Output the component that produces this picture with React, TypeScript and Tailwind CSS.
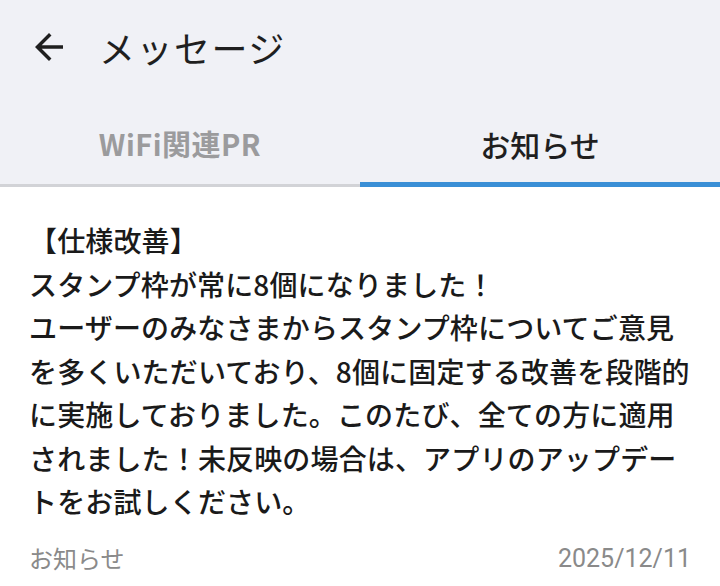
const lines = [
  "スタンプ枠が常に8個になりました！",
  "ユーザーのみなさまからスタンプ枠についてご意見",
  "を多くいただいており、8個に固定する改善を段階的",
  "に実施しておりました。このたび、全ての方に適用",
  "されました！未反映の場合は、アプリのアップデー",
  "トをお試しください。",
];

function BackArrow() {
  return (
    <svg viewBox="0 0 24 24" className="w-[42px] h-[42px] fill-[#1f1f1f]">
      <path d="M20 11H7.83l5.59-5.59L12 4l-8 8 8 8 1.41-1.41L7.83 13H20v-2z" />
    </svg>
  );
}

export default function App() {
  return (
    <div
      className="w-[720px] h-[586px] bg-white overflow-hidden"
      style={{ fontFamily: '"Noto Sans CJK JP", "Noto Sans", sans-serif' }}
    >
      <header className="bg-[#f0f1f6]">
        <div className="h-[94px] flex items-center pl-[28px]">
          <BackArrow />
          <h1 className="ml-[29px] text-[36px] leading-none text-[#1f1f1f] tracking-[1.5px]">
            メッセージ
          </h1>
        </div>

        <nav className="flex h-[93px]">
          <div className="flex-1 flex flex-col">
            <div className="flex-1 flex items-center justify-center pt-[12px]">
              <span className="text-[29px] font-bold text-[#9b9b9d] tracking-[0.5px]">
                WiFi関連PR
              </span>
            </div>
            <div className="h-[5px] flex items-end">
              <div className="w-full h-[3px] bg-[#d2d3d7]" />
            </div>
          </div>
          <div className="flex-1 flex flex-col">
            <div className="flex-1 flex items-center justify-center pt-[12px]">
              <span className="text-[30px] font-medium text-[#1f1f1f]">
                お知らせ
              </span>
            </div>
            <div className="h-[5px] bg-[#3a8fd6]" />
          </div>
        </nav>
      </header>

      <section className="px-[29px] pt-[32px]">
        <div className="text-[28px] leading-[43.5px] font-medium text-[#1a1a1a] whitespace-nowrap tracking-[0.15px]">
          <p>【仕様改善】</p>
          {lines.map((line) => (
            <p key={line}>{line}</p>
          ))}
        </div>

        <div className="mt-[16px] flex items-center justify-between">
          <span className="text-[24px] text-[#8a8a8a]">お知らせ</span>
          <span
            className="text-[25px] text-[#8a8a8a]"
            style={{ fontFamily: "Roboto, sans-serif" }}
          >
            2025/12/11
          </span>
        </div>
      </section>
    </div>
  );
}
